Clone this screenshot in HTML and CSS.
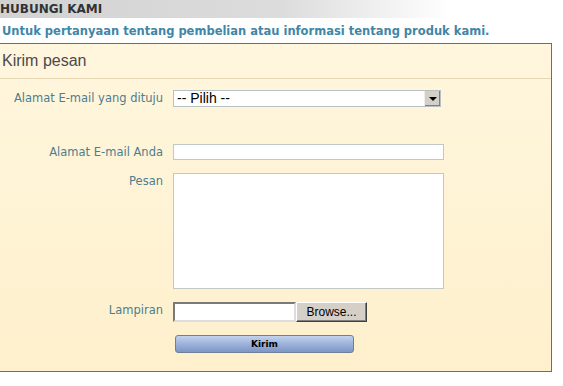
FILE: index.html
```html
<!DOCTYPE html>
<html>
	<head>
		<meta http-equiv="Content-Type" content="text/html; charset=utf-8" />
		<title>Hubungi Kami</title>
		<link rel="stylesheet" href="styles.css">
	</head>
	<body>
		<div class="titlebar">HUBUNGI KAMI</div>
		<p class="intro">Untuk pertanyaan tentang pembelian atau informasi tentang produk kami.</p>
		<div class="box">
			<div class="boxhead">Kirim pesan</div>
			<form class="contact">
				<label class="lbl">Alamat E-mail yang dituju</label>
				<div class="selectwrap">
					<select class="sel"><option>-- Pilih --</option></select>
					<span class="arrow"></span>
				</div>
				<div class="spacer"></div>
				<label class="lbl">Alamat E-mail Anda</label>
				<input type="text" class="txt">
				<label class="lbl">Pesan</label>
				<textarea class="area"></textarea>
				<label class="lbl">Lampiran</label>
				<div class="filewrap">
					<input type="text" class="filetxt">
					<button type="button" class="browse">Browse...</button>
				</div>
				<div></div>
				<div><button type="button" class="send">Kirim</button></div>
			</form>
		</div>
	</body>
</html>
```

FILE: styles.css
```css
body {margin:0;background:#fff;font-family:"DejaVu Sans", Verdana, sans-serif;font-size:11px;}
.titlebar {height:18px;line-height:19px;padding-left:0;font-weight:bold;font-size:12px;color:#333;background:linear-gradient(to right, #d2d2d2 0%, #dcdcdc 50%, #fff 80%);}
.intro {margin:6px 0 0 2px;font-weight:bold;font-size:11.5px;color:#3f86a8;line-height:14px;}
.box {width:552px;height:329px;margin-top:5px;border:1px solid #c4416f;border-left:0;background:linear-gradient(to bottom, #fff6de 0%, #fef0cc 100%);box-sizing:border-box;}
.boxhead {height:34px;line-height:34px;padding-left:2px;font-family:"Liberation Sans", Arial, sans-serif;font-size:16px;color:#4a4a4a;border-bottom:1px solid #e6d7b4;}
.contact {display:grid;grid-template-columns:163px 1fr;column-gap:10px;row-gap:13px;padding-top:11px;}
.lbl {text-align:right;color:#4d7e8e;font-size:11.5px;line-height:14px;padding-top:1px;}
.selectwrap {display:flex;width:268px;height:17px;border:1px solid #b8c0c2;background:#fff;box-sizing:border-box;}
.sel {flex:1;appearance:none;-webkit-appearance:none;border:0;background:#fff;font-family:"Liberation Sans", Arial, sans-serif;font-size:14px;padding:0 0 0 3px;height:15px;line-height:15px;color:#000;}
.arrow {width:15px;height:15px;background:#d4d0c8;border-left:1px solid #eee;box-shadow:inset -1px -1px 0 #808080;position:relative;}
.arrow:after {content:"";position:absolute;left:4px;top:6px;border-left:4px solid transparent;border-right:4px solid transparent;border-top:4px solid #000;}
.spacer {grid-column:1 / 3;height:11px;}
.txt {width:271px;height:16px;border:1px solid #c2c8c4;background:#fff;box-sizing:border-box;margin:0;}
.area {width:271px;height:116px;border:1px solid #c2c8c4;background:#fff;box-sizing:border-box;margin:0;resize:none;}
.filewrap {display:flex;height:20px;}
.filetxt {width:123px;height:20px;box-sizing:border-box;margin:0;border:2px solid #7a7a7a;border-right-color:#ddd;border-bottom-color:#ddd;background:#fff;}
.browse {width:71px;height:20px;margin:0;padding:0;font-family:"Liberation Sans", Arial, sans-serif;font-size:12px;color:#000;background:#d4d0c8;border:1px solid;border-color:#fff #404040 #404040 #fff;box-shadow:inset -1px -1px 0 #808080;}
.send {width:179px;height:18px;margin:0 0 0 2px;padding:0;font-family:"DejaVu Sans", Verdana, sans-serif;font-size:9px;font-weight:bold;color:#000;border:1px solid #6f7f98;border-radius:3px;background:linear-gradient(to bottom, #c3d3ee 0%, #9fb5dc 45%, #7d96c6 100%);}
```
